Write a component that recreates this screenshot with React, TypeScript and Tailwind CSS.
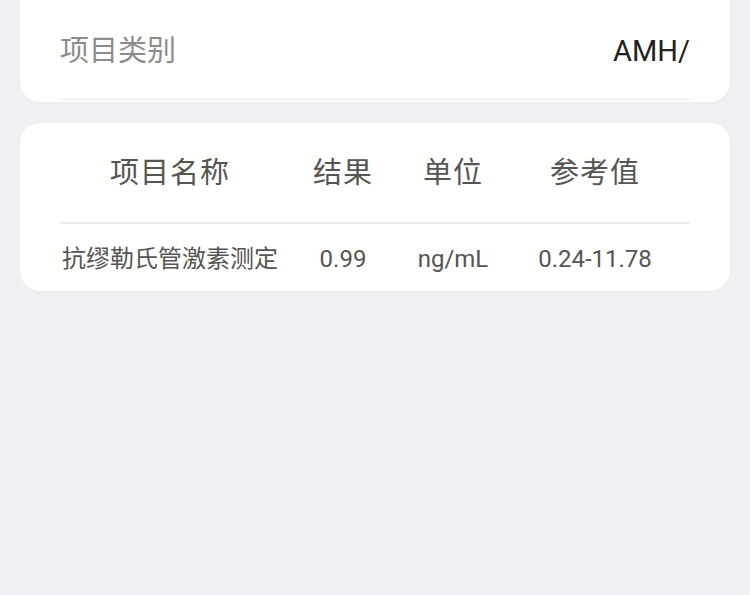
import React from "react";

const font = "font-['Roboto','Noto_Sans_CJK_SC',sans-serif]";

const headers = ["项目名称", "结果", "单位", "参考值"];
const row = ["抗缪勒氏管激素测定", "0.99", "ng/mL", "0.24-11.78"];
const widths = ["w-[220px]", "w-[126px]", "w-[94px]", "w-[190px]"];

export default function App() {
  return (
    <div className={`${font} w-[750px] h-[595px] overflow-hidden bg-[#efeff4]`}>
      <div className="px-5">
        {/* info card, top cut off */}
        <div className="-mt-[20px] h-[122px] rounded-b-[20px] bg-[#fffffd] shadow-[0_1px_3px_rgba(0,0,0,0.03)] px-10">
          <div className="h-[20px] border-b border-[#e6e6ea]"></div>
          <div className="h-[100px] flex items-center justify-between border-b border-[#ececf0]">
            <span className="text-[29px] text-[#8c8c8c] mt-[4px]">项目类别</span>
            <span className="text-[29px] text-[#222] mt-[4px]">AMH/</span>
          </div>
        </div>

        {/* result table */}
        <div className="mt-[21px] h-[168px] rounded-[20px] bg-[#fffffd] shadow-[0_1px_3px_rgba(0,0,0,0.03)] px-10">
          <div className="flex h-[101px] items-center border-b-2 border-[#ececf0]">
            {headers.map((h, i) => (
              <div key={h} className={`${widths[i]} text-center text-[29px] text-[#555] tracking-[1px] mt-[2px]`}>
                {h}
              </div>
            ))}
          </div>
          <div className="flex h-[65px] items-center">
            {row.map((c, i) => (
              <div key={c} className={`${widths[i]} text-center text-[24px] text-[#555] pt-[5px]`}>
                {c}
              </div>
            ))}
          </div>
        </div>
      </div>
    </div>
  );
}
